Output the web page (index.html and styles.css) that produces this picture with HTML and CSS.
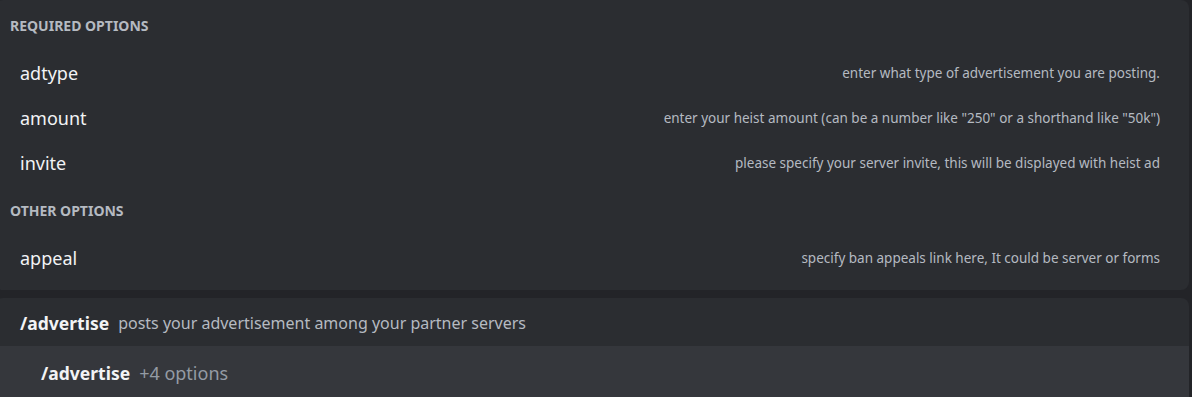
FILE: index.html
```html
<!DOCTYPE html>
<html lang="en">
<head>
  <meta charset="UTF-8" />
  <title>Command options</title>
  <link rel="stylesheet" href="styles.css">
</head>
<body>
  <div class="options-card">
    <h3 class="section-title">Required Options</h3>
    <div class="option-row">
      <span class="option-name">adtype</span>
      <span class="option-desc">enter what type of advertisement you are posting.</span>
    </div>
    <div class="option-row">
      <span class="option-name">amount</span>
      <span class="option-desc">enter your heist amount (can be a number like "250" or a shorthand like "50k")</span>
    </div>
    <div class="option-row">
      <span class="option-name">invite</span>
      <span class="option-desc">please specify your server invite, this will be displayed with heist ad</span>
    </div>
    <h3 class="section-title">Other Options</h3>
    <div class="option-row">
      <span class="option-name">appeal</span>
      <span class="option-desc">specify ban appeals link here, It could be server or forms</span>
    </div>
  </div>

  <div class="command-card">
    <div class="command-header">
      <span class="command-name">/advertise</span>
      <span class="command-desc">posts your advertisement among your partner servers</span>
    </div>
    <div class="command-item">
      <span class="command-name">/advertise</span>
      <span class="command-extra">+4 options</span>
    </div>
  </div>
</body>
</html>
```

FILE: styles.css
```css
* {
  box-sizing: border-box;
}
body {
  margin: 0;
  background: #232428;
  font-family: "Noto Sans", "Open Sans", sans-serif;
  color: #dbdee1;
  overflow: hidden;
}
.options-card {
  margin: 0 3px 0 -5px;
  padding: 0 29px 10px 15px;
  height: 290px;
  background: #2b2d31;
  border-radius: 8px;
}
.section-title {
  margin: 0;
  height: 50px;
  display: flex;
  align-items: center;
  font-size: 14px;
  font-weight: 700;
  text-transform: uppercase;
  color: #b5bac1;
}
.option-row {
  height: 45px;
  display: flex;
  align-items: center;
  justify-content: space-between;
  padding-left: 10px;
}
.option-name {
  font-size: 18px;
  color: #f2f3f5;
}
.option-desc {
  font-size: 13.5px;
  color: #b5bac1;
}
.command-card {
  margin: 8px 3px 0 -5px;
  background: #2b2d31;
  border-radius: 8px 8px 0 0;
  overflow: hidden;
}
.command-header {
  height: 48px;
  display: flex;
  align-items: center;
  padding: 2px 0 0 25px;
}
.command-name {
  font-size: 17.5px;
  font-weight: 700;
  color: #f2f3f5;
  margin-right: 9px;
}
.command-desc {
  font-size: 16px;
  color: #b5bac1;
}
.command-item {
  height: 54px;
  display: flex;
  align-items: center;
  padding: 0 0 0 46px;
  background: #35373c;
}
.command-extra {
  font-size: 18px;
  color: #949ba4;
}
```
